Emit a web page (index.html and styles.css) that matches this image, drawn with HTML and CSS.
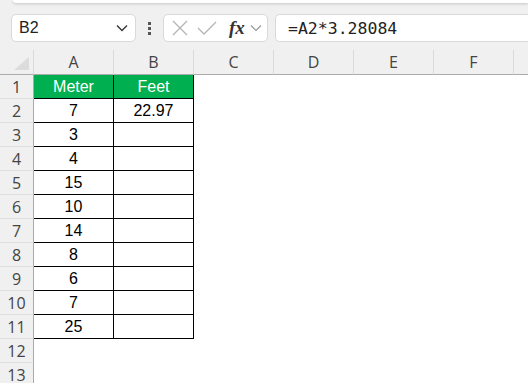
FILE: index.html
```html
<!DOCTYPE html>
<html lang="en">
<head>
    <meta charset="UTF-8">
    <title>Meter to Feet</title>
    <link rel="stylesheet" href="styles.css">
</head>
<body>
    <div class="ribbon-edge"></div>

    <div class="formula-bar">
        <div class="name-box">
            <span>B2</span>
            <svg class="chev" width="12" height="8" viewBox="0 0 12 8"><path d="M1 1.5 L6 6.5 L11 1.5" fill="none" stroke="#333" stroke-width="1.3"/></svg>
        </div>
        <div class="grip"><i></i><i></i><i></i></div>
        <div class="fn-box">
            <svg width="16" height="16" viewBox="0 0 16 16"><path d="M1 1 L15 15 M15 1 L1 15" stroke="#b4b4b4" stroke-width="1.3" fill="none"/></svg>
            <svg width="20" height="16" viewBox="0 0 20 16"><path d="M1 8 L7 14 L19 2" stroke="#b4b4b4" stroke-width="1.3" fill="none"/></svg>
            <span class="fx">fx</span>
            <svg class="chev-sm" width="12" height="8" viewBox="0 0 12 8"><path d="M1 1.5 L6 6.5 L11 1.5" fill="none" stroke="#999" stroke-width="1.2"/></svg>
        </div>
        <div class="formula">=A2*3.28084</div>
    </div>

    <div class="sheet" id="sheet"></div>

    <script>
        const meters = [7, 3, 4, 15, 10, 14, 8, 6, 7, 25];
        const cols = ['A', 'B', 'C', 'D', 'E', 'F', ''];
        const sheet = document.getElementById('sheet');

        function cell(cls, text) {
            const div = document.createElement('div');
            div.className = cls;
            div.textContent = text || '';
            sheet.appendChild(div);
        }

        cell('corner');
        cols.forEach(c => cell('col-head', c));

        for (let r = 1; r <= 13; r++) {
            cell('row-head', r);
            cols.forEach((c, i) => {
                if (r === 1 && i < 2) {
                    cell('cell green', i === 0 ? 'Meter' : 'Feet');
                } else if (r <= 11 && i === 0) {
                    cell('cell boxed', meters[r - 2]);
                } else if (r <= 11 && i === 1) {
                    cell('cell boxed', r === 2 ? '22.97' : '');
                } else {
                    cell('cell');
                }
            });
        }
    </script>
</body>
</html>
```

FILE: styles.css
```css
body {
    margin: 0;
    width: 528px;
    height: 383px;
    overflow: hidden;
    background: #f0f0f0;
    font-family: 'Liberation Sans', Arial, sans-serif;
}

.ribbon-edge {
    height: 3px;
    margin-left: 13px;
    background: #fff;
    border-bottom-left-radius: 6px;
    box-shadow: 0 1px 3px rgba(0, 0, 0, 0.18);
}

.formula-bar {
    display: flex;
    align-items: center;
    height: 28px;
    margin-top: 11px;
    padding-left: 11px;
}

.name-box,
.fn-box,
.formula {
    box-sizing: border-box;
    height: 28px;
    background: #fff;
    border: 1px solid #d9d9d9;
    border-radius: 5px;
    display: flex;
    align-items: center;
}

.name-box {
    width: 125px;
    padding: 0 7px 0 7px;
    justify-content: space-between;
    font-size: 16px;
    color: #222;
}

.grip {
    width: 27px;
    display: flex;
    flex-direction: column;
    align-items: center;
    gap: 2px;
}

.grip i {
    width: 3px;
    height: 3px;
    background: #555;
}

.fn-box {
    width: 105px;
    padding-left: 8px;
    gap: 9px;
}

.fx {
    font-family: 'Liberation Serif', serif;
    font-style: italic;
    font-weight: bold;
    font-size: 19px;
    color: #333;
    margin-left: 3px;
}

.chev-sm {
    margin-left: -4px;
}

.formula {
    flex: 1;
    margin-left: 7px;
    border-right: none;
    border-top-right-radius: 0;
    border-bottom-right-radius: 0;
    padding-left: 12px;
    font-family: 'DejaVu Sans Mono', monospace;
    font-size: 16.5px;
    color: #222;
}

.sheet {
    margin-top: 8px;
    display: grid;
    grid-template-columns: 34px repeat(7, 80px);
    grid-template-rows: 25px;
    grid-auto-rows: 24px;
}

.sheet > div {
    box-sizing: border-box;
    display: flex;
    align-items: center;
    justify-content: center;
    font-size: 16px;
}

.corner,
.col-head {
    background: #f0f0f0;
    border-right: 1px solid #dadada;
    border-bottom: 1px solid #ababab;
}

.corner {
    position: relative;
}

.corner::after {
    content: "";
    position: absolute;
    right: 4px;
    bottom: 4px;
    border-left: 15px solid transparent;
    border-bottom: 13px solid #dcdcdc;
}

.col-head {
    font-family: 'Open Sans', sans-serif;
    color: #444;
}

.row-head {
    background: #f0f0f0;
    border-right: 1px solid #ababab;
    border-bottom: 1px solid #dfdfdf;
    font-family: 'Open Sans', sans-serif;
    color: #444;
}

.cell {
    background: #fff;
    color: #000;
}

.green,
.boxed {
    border-right: 1px solid #000;
    border-bottom: 1px solid #000;
}

.green {
    background: #00b050;
    color: #fff;
}
```
